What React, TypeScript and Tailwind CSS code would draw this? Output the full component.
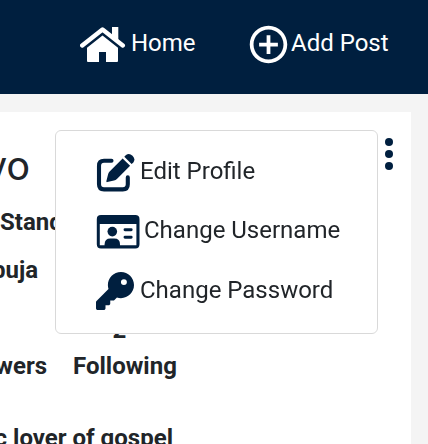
import { FaKey } from "react-icons/fa6";
import { MdAddCircleOutline } from "react-icons/md";

function HomeIcon() {
  return (
    <svg viewBox="80 26 46 37" className="h-[37px] w-[46px] shrink-0" fill="currentColor">
      <path d="M112 27h6.3v14l-6.3-5z" />
      <path d="M82.2 45.5 102.5 29.6 122.8 45.5" fill="none" stroke="currentColor" strokeWidth="4.4" strokeLinecap="round" strokeLinejoin="round" />
      <path d="M102.5 35.6 118 47.8V61q0 1-1 1H106V52H99V62H88q-1 0-1-1V47.8z" />
    </svg>
  );
}

function EditIcon() {
  return (
    <svg viewBox="96 153 39 39" className="h-[39px] w-[39px] shrink-0" fill="none">
      <path d="M111.5 160.8H104Q99 160.8 99 165.8V184.3Q99 189.4 104 189.4H122.8Q127.8 189.4 127.8 184.3V177.4" stroke="currentColor" strokeWidth="4.1" strokeLinecap="round" />
      <path d="M122.6 158.4 130.1 165.8 116.9 179Q115.7 180.1 114 180.5L107.3 182.1Q106 182.3 106.4 181L108.1 174.2Q108.5 172.6 109.6 171.5z" fill="currentColor" />
      <path d="M124.3 156.7 126 155Q129.2 152.6 132.5 155.7 135.9 159.1 133.3 162.4L131.6 164.1z" fill="currentColor" />
    </svg>
  );
}

function IdCardIcon() {
  return (
    <svg viewBox="96 214 44 36" className="h-[36px] w-[44px] shrink-0" fill="currentColor">
      <path fillRule="evenodd" d="M101 215H135.3Q139.5 215 139.5 219.2V244.2Q139.5 248.4 135.3 248.4H101Q96.8 248.4 96.8 244.2V219.2Q96.8 215 101 215zM99.8 224V245.2H136.4V224z" />
      <circle cx="112.3" cy="231.6" r="4.8" />
      <path d="M104.6 246V244.5Q104.6 238.6 110.4 238.6H114.2Q120 238.6 120 244.5V246z" />
      <path d="M125 229.7H131.2M125 237.3H131.2" fill="none" stroke="currentColor" strokeWidth="2.9" strokeLinecap="round" />
    </svg>
  );
}

function Header() {
  return (
    <header className="flex h-[94px] items-start bg-[#001f3f] pl-[80px] text-white">
      <a className="flex h-[86px] w-[166px] items-center">
        <span className="mt-[3px]">
          <HomeIcon />
        </span>
        <span className="ml-[5px]">Home</span>
      </a>
      <a className="flex h-[86px] items-center">
        <MdAddCircleOutline className="mt-[2px] h-[45px] w-[45px] shrink-0" />
        <span>Add Post</span>
      </a>
    </header>
  );
}

function OptionsMenu() {
  return (
    <ul className="absolute left-[55px] top-[18px] flex h-[204px] w-[323px] flex-col rounded-[6px] border border-[#d9d9d9] bg-white pl-[40px] pt-[10px] font-normal text-[#212529] will-change-transform">
      <li className="flex h-[60px] items-center">
        <span className="mt-[3px] text-[#001f3f]">
          <EditIcon />
        </span>
        <span className="ml-[5px]">Edit Profile</span>
      </li>
      <li className="flex h-[58px] items-center">
        <span className="mt-[4px] text-[#001f3f]">
          <IdCardIcon />
        </span>
        <span className="ml-[4px]">Change Username</span>
      </li>
      <li className="flex h-[62px] items-center">
        <FaKey className="mt-[2px] h-[38px] w-[38px] shrink-0 text-[#001f3f]" />
        <span className="ml-[6px]">Change Password</span>
      </li>
    </ul>
  );
}

export default function App() {
  return (
    <div className="h-[444px] w-[428px] overflow-hidden bg-[#f4f4f4] font-['Roboto',sans-serif] text-[24px] leading-9 whitespace-nowrap text-[#212529]">
      <Header />
      <main className="relative mt-[18px] h-[332px] w-[411px] overflow-hidden bg-white font-bold">
        <div className="flex h-[92px] justify-between pt-[26px]">
          <h1 className="flex w-[30px] justify-end text-[41px] leading-[57px] font-normal">vo</h1>
          <button className="mr-[18px] flex h-[32px] w-[8px] flex-col items-center justify-between" aria-label="Options">
            <i className="size-[8px] rounded-full bg-[#001f3f]" />
            <i className="size-[8px] rounded-full bg-[#001f3f]" />
            <i className="size-[8px] rounded-full bg-[#001f3f]" />
          </button>
        </div>
        <p className="h-12">Stand</p>
        <p className="flex h-[60px] w-[38px] justify-end">buja</p>
        <div className="flex items-end gap-[26px] text-center">
          <span className="flex w-[47px] justify-end">wers</span>
          <div className="flex flex-col">
            <span className="h-[36px] pr-[11px]">2</span>
            <span>Following</span>
          </div>
        </div>
        <p className="mt-[36px] flex w-[173px] justify-end">c lover of gospel</p>
        <OptionsMenu />
      </main>
    </div>
  );
}
